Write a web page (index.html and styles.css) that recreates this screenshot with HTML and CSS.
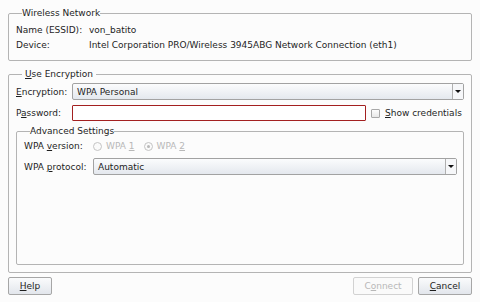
FILE: index.html
```html
<!DOCTYPE html>
<html>
<head>
<meta charset="utf-8">
<link rel="stylesheet" href="styles.css">
</head>
<body>
<div class="dialog">
  <fieldset class="group wireless">
    <legend class="title">Wireless Network</legend>
    <div class="grid grid-info">
      <span class="lbl">Name (ESSID):</span><span class="val">von_batito</span>
      <span class="lbl">Device:</span><span class="val">Intel Corporation PRO/Wireless 3945ABG Network Connection (eth1)</span>
    </div>
  </fieldset>

  <fieldset class="group enc">
    <legend class="title title-pad"><u>U</u>se Encryption</legend>
    <div class="enc-body">
      <div class="row">
        <span class="lbl lbl-enc"><u>E</u>ncryption:</span>
        <div class="combo combo-wide"><span class="combo-text">WPA Personal</span><span class="combo-btn"><span class="arrow"></span></span></div>
      </div>
      <div class="row row-pw">
        <span class="lbl lbl-enc">P<u>a</u>ssword:</span>
        <div class="pw"></div>
        <span class="check"></span>
        <span class="check-lbl"><u>S</u>how credentials</span>
      </div>
      <fieldset class="group adv">
        <legend class="title">Advanced Settings</legend>
        <div class="adv-body">
          <div class="row row-ver">
            <span class="lbl lbl-adv">WPA <u>v</u>ersion:</span>
            <span class="radio"></span><span class="dis">WPA <u>1</u></span>
            <span class="radio radio-on"></span><span class="dis">WPA <u>2</u></span>
          </div>
          <div class="row">
            <span class="lbl lbl-adv">WPA <u>p</u>rotocol:</span>
            <div class="combo combo-adv"><span class="combo-text">Automatic</span><span class="combo-btn"><span class="arrow"></span></span></div>
          </div>
        </div>
      </fieldset>
    </div>
  </fieldset>

  <div class="buttons">
    <button class="btn btn-help"><u>H</u>elp</button>
    <span class="spacer"></span>
    <button class="btn btn-connect" disabled>C<u>o</u>nnect</button>
    <button class="btn btn-cancel"><u>C</u>ancel</button>
  </div>
</div>
</body>
</html>
```
FILE: styles.css
```css
html, body {
  margin: 0;
  padding: 0;
  background: #fcfcfc;
}
body {
  font-family: "DejaVu Sans", "Liberation Sans", sans-serif;
  font-size: 9px;
  color: #1e1e1e;
}
u { text-decoration: underline; text-underline-offset: 1px; }
.dialog {
  box-sizing: border-box;
  height: 302px;
  padding: 8px 8px 7px 8px;
  display: flex;
  flex-direction: column;
}
.group {
  margin: 0;
  border: 1px solid #b4b4b4;
  border-radius: 2px;
  min-width: 0;
}
.title {
  padding: 0;
  margin-left: 6px;
  line-height: 11px;
  color: #1e1e1e;
}
.title-pad { padding: 0 3px; margin-left: 6px; }
.wireless {
  padding: 3px 7px 8px 7px;
}
.grid-info {
  display: grid;
  grid-template-columns: 73px 1fr;
  grid-auto-rows: 15px;
  align-items: center;
  white-space: nowrap;
}
.enc {
  margin-top: 8px;
  flex: 1;
  padding: 3px 7px 7px 7px;
  display: flex;
  flex-direction: column;
}
.enc-body {
  display: flex;
  flex-direction: column;
  flex: 1;
}
.row {
  display: flex;
  align-items: center;
  white-space: nowrap;
}
.lbl-enc { width: 56px; }
.lbl-adv { width: 69px; }
.combo {
  box-sizing: border-box;
  height: 17px;
  border: 1px solid #a2a2a2;
  border-radius: 2px;
  background: linear-gradient(#fbfcfd, #e4e8ee);
  display: flex;
  align-items: center;
}
.combo-wide { flex: 1; }
.combo-adv { flex: 1; }
.combo-text { flex: 1; padding-left: 4px; }
.combo-btn {
  width: 10px;
  height: 100%;
  border-left: 1px solid #b0b0b0;
  display: flex;
  align-items: center;
  justify-content: center;
  background: #f6f7f9;
}
.arrow {
  width: 0; height: 0;
  border-left: 3px solid transparent;
  border-right: 3px solid transparent;
  border-top: 3px solid #111;
}
.row-pw { margin-top: 5px; }
.pw {
  box-sizing: border-box;
  width: 294px;
  height: 16px;
  border: 1px solid #a32020;
  background: #fff;
  border-radius: 1px;
}
.check {
  box-sizing: border-box;
  width: 9px; height: 9px;
  margin-left: 5px;
  border: 1px solid #a8a8a8;
  background: linear-gradient(#fdfdfd, #e8e8e8);
  border-radius: 1px;
}
.check-lbl { margin-left: 5px; }
.adv {
  margin-top: 5px;
  flex: 1;
  padding: 2px 6px 0 7px;
}
.row-ver { height: 14px; }
.adv-body .row + .row { margin-top: 5px; }
.radio {
  box-sizing: border-box;
  width: 9px; height: 9px;
  border: 1px solid #c4c4c4;
  border-radius: 50%;
  background: #fafafa;
  margin-right: 4px;
  display: flex;
  align-items: center;
  justify-content: center;
}
.radio-on { margin-left: 9px; }
.radio-on::after {
  content: "";
  width: 3px; height: 3px;
  border-radius: 50%;
  background: #b8b8b8;
}
.dis { color: #b8b8b8; }
.buttons {
  display: flex;
  margin-top: 4px;
  gap: 5px;
}
.spacer { flex: 1; }
.btn {
  box-sizing: border-box;
  height: 18px;
  font: inherit;
  color: #1e1e1e;
  border: 1px solid #a6a6a6;
  border-radius: 2px;
  background: linear-gradient(#fafbfc, #e2e6ec);
  padding: 0;
}
.btn-help { width: 44px; }
.btn-connect {
  width: 60px;
  color: #b8b8b8;
  border-color: #d2d2d2;
  background: #fafafa;
}
.btn-cancel { width: 54px; }
```
